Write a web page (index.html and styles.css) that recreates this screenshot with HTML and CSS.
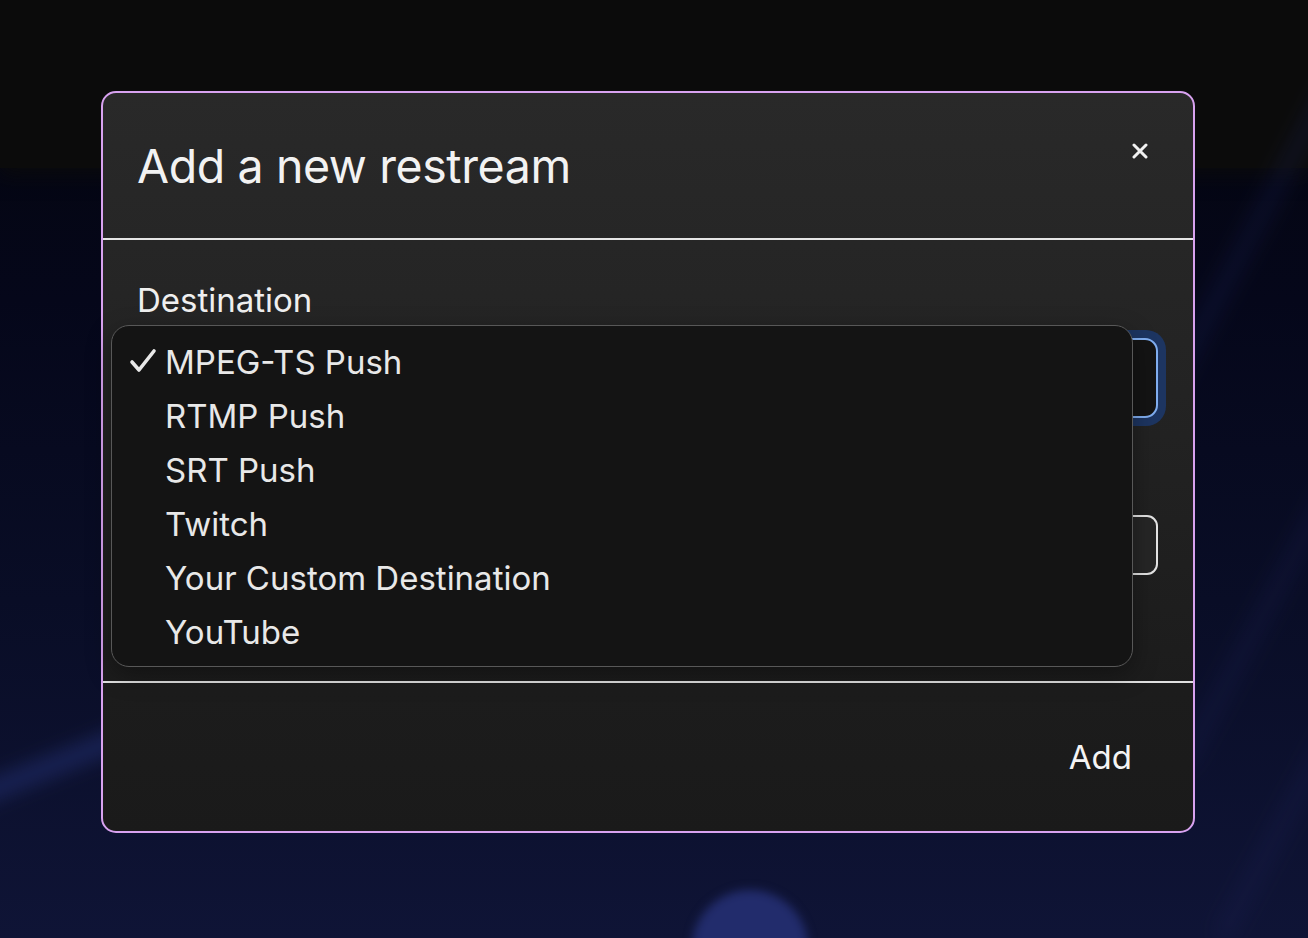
FILE: index.html
```html
<!DOCTYPE html>
<html lang="en">
<head>
<meta charset="utf-8">
<title>Add a new restream</title>
<link rel="stylesheet" href="styles.css">
</head>
<body>
<div class="backdrop">
  <div class="topbar"></div>
  <div class="streak streak-a"></div>
  <div class="streak streak-b"></div>
  <div class="streak streak-c"></div>
  <div class="streak streak-d"></div>
  <div class="glow"></div>
</div>
<div class="overlay">
  <div class="modal">
    <div class="modal-header">
      <h1 class="modal-title">Add a new restream</h1>
      <button class="close-btn" aria-label="Close">
        <svg width="16" height="16" viewBox="0 0 16 16"><path d="M2 2 L14 14 M14 2 L2 14" stroke="#f2f2f2" stroke-width="3" stroke-linecap="round"/></svg>
      </button>
    </div>
    <div class="modal-body">
      <label class="field-label">Destination</label>
      <div class="select-ring"><div class="select-box"></div></div>
      <label class="field-label hidden-label">Name</label>
      <div class="text-input"></div>
    </div>
    <div class="modal-footer">
      <button class="add-btn">Add</button>
    </div>
    <ul class="dropdown">
      <li class="option selected"><span class="check"><svg width="28" height="26" viewBox="0 0 28 26"><path d="M3 14 L10 22 L25 3" fill="none" stroke="#e8e8e8" stroke-width="3.6" stroke-linecap="round" stroke-linejoin="round"/></svg></span>MPEG-TS Push</li>
      <li class="option"><span class="check"></span>RTMP Push</li>
      <li class="option"><span class="check"></span>SRT Push</li>
      <li class="option"><span class="check"></span>Twitch</li>
      <li class="option"><span class="check"></span>Your Custom Destination</li>
      <li class="option"><span class="check"></span>YouTube</li>
    </ul>
  </div>
</div>
</body>
</html>
```
FILE: styles.css
```css
* { box-sizing: border-box; }
html, body { margin: 0; padding: 0; }
body {
  width: 1308px;
  height: 938px;
  overflow: hidden;
  position: relative;
  font-family: Inter, "Noto Sans", "Liberation Sans", sans-serif;
  background: linear-gradient(to bottom, #04050c 0, #05071a 300px, #090d26 600px, #0f1436 938px);
}
.backdrop {
  position: absolute;
  inset: 0;
  overflow: hidden;
  z-index: 0;
}
.topbar {
  position: absolute;
  left: 0; top: 0; right: 0;
  height: 168px;
  background: #0b0b0b;
  box-shadow: 0 6px 18px rgba(11,11,11,0.9);
}
.streak {
  position: absolute;
  height: 22px;
  border-radius: 11px;
  filter: blur(9px);
}
.streak-a {
  left: -60px; top: 800px; width: 520px;
  background: rgba(36, 50, 120, 0.5);
  transform: rotate(-22deg);
  transform-origin: left center;
}
.streak-b {
  left: 1120px; top: 470px; width: 520px;
  background: rgba(28, 36, 90, 0.22);
  transform: rotate(-62deg);
  transform-origin: left center;
}
.streak-c {
  left: 1180px; top: 760px; width: 520px;
  background: rgba(28, 36, 90, 0.2);
  transform: rotate(-62deg);
  transform-origin: left center;
}
.streak-d {
  left: 1220px; top: 930px; width: 420px;
  background: rgba(28, 36, 90, 0.2);
  transform: rotate(-62deg);
  transform-origin: left center;
}
.glow {
  position: absolute;
  left: 692px; top: 890px;
  width: 116px; height: 116px;
  border-radius: 50%;
  background: #222c6c;
  filter: blur(5px);
}
.overlay {
  position: relative;
  z-index: 1;
  padding: 91px 0 0 101px;
}
.modal {
  position: relative;
  width: 1094px;
  height: 742px;
  border: 2px solid #d8a2f0;
  border-radius: 15px;
  background: linear-gradient(to bottom, #292929 0, #232323 300px, #1c1c1c 600px, #1a1a1a 742px);
  display: flex;
  flex-direction: column;
}
.modal-header {
  height: 147px;
  border-bottom: 2px solid #e6e6e6;
  display: flex;
  align-items: center;
  justify-content: space-between;
  padding: 0 38px 0 34px;
}
.modal-title {
  margin: 0;
  font-size: 46.5px;
  font-weight: 400;
  color: #f2f2f2;
  letter-spacing: -0.4px;
}
.close-btn {
  align-self: flex-start;
  margin-top: 43px;
  width: 30px;
  height: 30px;
  padding: 0;
  border: 0;
  background: transparent;
  display: flex;
  align-items: center;
  justify-content: center;
}
.modal-body {
  height: 443px;
  border-bottom: 2px solid #e0e0e0;
  padding: 40px 35px 0 34px;
  display: flex;
  flex-direction: column;
}
.field-label {
  font-size: 33px;
  line-height: 40px;
  color: #efefef;
}
.hidden-label {
  margin-top: 26px;
  visibility: hidden;
}
.select-ring {
  margin-top: 10px;
  padding: 8px;
  margin-left: -8px;
  margin-right: -8px;
  border-radius: 20px;
  background: #1d3561;
}
.select-box {
  height: 80px;
  border: 2px solid #80aef0;
  border-radius: 13px;
  background: #141414;
}
.text-input {
  margin-top: 23px;
  height: 60px;
  border: 2px solid #e4e4e4;
  border-radius: 11px;
  background: #262626;
}
.modal-footer {
  flex: 1;
  display: flex;
  align-items: center;
  justify-content: flex-end;
  padding: 0 61px 0 34px;
}
.add-btn {
  padding: 0;
  border: 0;
  background: transparent;
  font-family: inherit;
  font-size: 33px;
  color: #f4f4f4;
}
.dropdown {
  position: absolute;
  left: 8px;
  top: 232px;
  width: 1022px;
  height: 342px;
  margin: 0;
  padding: 9px 0 0 0;
  list-style: none;
  background: #141414;
  border: 1px solid #585858;
  border-radius: 18px;
  box-shadow: 0 8px 24px rgba(0,0,0,0.35);
}
.option {
  height: 54px;
  display: flex;
  align-items: center;
  font-size: 33px;
  color: #e8e8e8;
}
.check {
  display: flex;
  align-items: center;
  width: 53px;
  height: 54px;
  padding-left: 17px;
}
.check svg { margin-top: -2px; }
```
